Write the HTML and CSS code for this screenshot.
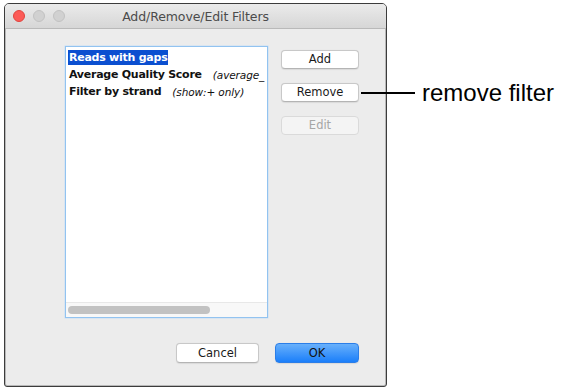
FILE: index.html
```html
<!DOCTYPE html>
<html>
<head>
<meta charset="utf-8">
<link rel="stylesheet" href="styles.css">
</head>
<body>
<div class="stage">
  <div class="window">
    <div class="titlebar">
      <div class="lights">
        <span class="light red"></span>
        <span class="light gray"></span>
        <span class="light gray"></span>
      </div>
      <div class="title">Add/Remove/Edit Filters</div>
    </div>
    <div class="content">
      <div class="main">
        <div class="list">
          <div class="items">
            <div class="row"><span class="name selected">Reads with gaps</span></div>
            <div class="row"><span class="name">Average Quality Score</span><span class="param">(average_</span></div>
            <div class="row"><span class="name">Filter by strand</span><span class="param">(show:+ only)</span></div>
          </div>
          <div class="hscroll"><div class="thumb"></div></div>
        </div>
        <div class="side">
          <button class="btn">Add</button>
          <button class="btn">Remove</button>
          <button class="btn disabled">Edit</button>
        </div>
      </div>
      <div class="footer">
        <button class="btn wide">Cancel</button>
        <button class="btn wide primary">OK</button>
      </div>
    </div>
  </div>
  <div class="callout">
    <span class="leader"></span>
    <span class="label">remove filter</span>
  </div>
</div>
</body>
</html>
```
FILE: styles.css
```css
* { box-sizing: border-box; }
html, body { margin: 0; padding: 0; background: #ffffff; }
body { width: 562px; height: 390px; overflow: hidden; }

.stage {
  position: relative;
  padding: 3px 0 0 4px;
}

.window {
  width: 383px;
  height: 384px;
  background: #ececec;
  border: 1px solid #3c3c3c;
  border-radius: 5px 5px 3px 3px;
  box-shadow: inset 1px 0 0 #b8b8b8, inset -1px 0 0 #b8b8b8, inset 0 -1px 0 #b8b8b8;
  display: flex;
  flex-direction: column;
  overflow: hidden;
  font-family: "DejaVu Sans", "Lucida Grande", sans-serif;
}

.titlebar {
  height: 25px;
  flex: none;
  background: linear-gradient(#ebebeb, #d6d6d6);
  border-bottom: 1px solid #b9b9b9;
  display: flex;
  align-items: center;
  position: relative;
}
.lights {
  display: flex;
  gap: 8px;
  padding-left: 8px;
}
.light {
  width: 12px;
  height: 12px;
  border-radius: 50%;
  display: block;
}
.light.red { background: #fc5b57; border: 1px solid #e0443e; }
.light.gray { background: #d1d1d1; border: 1px solid #c2c2c2; }
.title {
  position: absolute;
  left: 0; right: 0; top: 0; bottom: 0;
  display: flex;
  align-items: center;
  justify-content: center;
  font-size: 12.5px;
  color: #4b4b4b;
  letter-spacing: -0.1px;
}

.content {
  flex: 1;
  display: flex;
  flex-direction: column;
  padding: 17px 27px 0 60px;
}
.main {
  display: flex;
  gap: 13px;
}
.list {
  width: 203px;
  height: 272px;
  background: #ffffff;
  border: 1px solid #92c3f0;
  box-shadow: 0 0 0 0.5px #c5def6;
  display: flex;
  flex-direction: column;
  overflow: hidden;
}
.items {
  flex: 1;
  padding: 2px 0 0 2px;
  white-space: nowrap;
  overflow: hidden;
}
.row {
  height: 17px;
  display: flex;
  align-items: center;
  font-size: 11px;
  color: #111;
}
.name {
  font-weight: bold;
  letter-spacing: -0.25px;
  padding: 0 1px;
  line-height: 15px;
}
.name.selected {
  background: #0b4fd0;
  color: #ffffff;
}
.param {
  font-style: italic;
  font-size: 10.5px;
  margin-left: 10px;
  letter-spacing: -0.1px;
}
.hscroll {
  height: 15px;
  flex: none;
  background: #f8f8f8;
  border-top: 1px solid #e8e8e8;
  padding: 3px 0 0 2px;
}
.thumb {
  width: 142px;
  height: 8px;
  border-radius: 4px;
  background: #c2c2c2;
}

.side {
  display: flex;
  flex-direction: column;
  gap: 14px;
  padding-top: 4px;
}
.btn {
  width: 78px;
  height: 19px;
  padding: 0;
  margin: 0;
  background: #ffffff;
  border: 1px solid #c8c8c8;
  border-bottom-color: #b4b4b4;
  border-radius: 4px;
  box-shadow: 0 0.5px 1px rgba(0,0,0,0.08);
  font-family: "DejaVu Sans", "Lucida Grande", sans-serif;
  font-size: 11.5px;
  color: #1a1a1a;
  line-height: 17px;
  text-align: center;
}
.btn.disabled {
  background: #f4f4f4;
  border-color: #dadada;
  color: #a6a6a6;
  box-shadow: none;
}
.footer {
  display: flex;
  justify-content: flex-end;
  gap: 16px;
  padding-top: 25px;
}
.btn.wide {
  width: 83px;
  height: 20px;
  line-height: 18px;
}
.btn.primary {
  width: 84px;
  background: linear-gradient(#68b0fb, #1b7ffa);
  border-color: #2b7ee8;
  color: #111;
}

.callout {
  position: absolute;
  left: 361px;
  top: 79px;
  display: flex;
  align-items: center;
  gap: 7px;
}
.leader {
  display: block;
  width: 54px;
  height: 2px;
  background: #000;
}
.label {
  font-family: "Liberation Sans", Arial, sans-serif;
  font-size: 24px;
  color: #000;
  line-height: 27px;
}
```
